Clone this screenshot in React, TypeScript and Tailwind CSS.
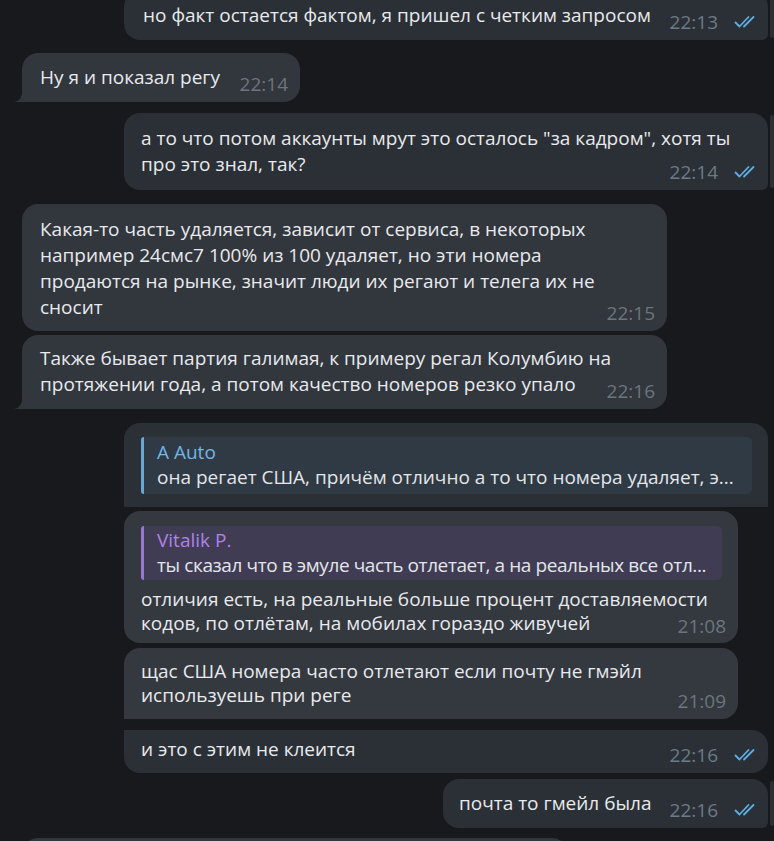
import React from "react";

const Check = () => (
  <svg width="26" height="14" viewBox="0 0 26 14" fill="none" stroke="#5caee3" strokeWidth="1.8" strokeLinecap="round" strokeLinejoin="round">
    <path d="M1.5 7.5 L5.5 11.5 L14.5 2" />
    <path d="M10 11.5 L19.5 2" />
  </svg>
);

const OutTime = ({ t }: { t: string }) => (
  <div className="absolute right-[8px] bottom-[5px] flex items-baseline gap-[16px] text-[19px] leading-[26px] text-[#6c7b88] whitespace-nowrap">
    <span>{t}</span>
    <Check />
  </div>
);

const InTime = ({ t, bottom = "bottom-[5px]" }: { t: string; bottom?: string }) => (
  <div className={`absolute right-[12px] ${bottom} text-[19px] leading-[26px] text-[#6d757d] whitespace-nowrap`}>{t}</div>
);

const InTail = ({ color }: { color: string }) => (
  <svg className="absolute left-[-9px] bottom-0" width="10" height="17" viewBox="0 0 10 17">
    <path d="M10 0 Q10 17 0 17 L10 17 Z" fill={color} />
  </svg>
);

const OutStrip = () => (
  <div className="absolute right-[-6px] top-[2px] bottom-[2px] w-[4px] rounded-[2px] bg-[#2b3036]" />
);

export default function App() {
  return (
    <div className="w-[774px] h-[841px] overflow-hidden bg-[#18191d] font-['Open_Sans',sans-serif] text-[19px] leading-[26px] text-[#e8eaed]">
      <div className="flex flex-col mt-[-9px]">
        {/* 1 */}
        <div className="flex justify-end pr-[6px]">
          <div className="relative w-[644px] h-[49px] rounded-[16px] rounded-br-[6px] bg-[#2b3036] pl-[19px] pt-[11px] whitespace-nowrap">
            но факт остается фактом, я пришел с четким запросом
            <OutTime t="22:13" />
            <OutStrip />
          </div>
        </div>
        {/* 2 */}
        <div className="flex justify-start pl-[22px] mt-[13px]">
          <div className="relative w-[278px] h-[49px] rounded-[16px] rounded-bl-none bg-[#32363d] pl-[18px] pt-[11px] whitespace-nowrap">
            Ну я и показал регу
            <InTime t="22:14" />
            <InTail color="#32363d" />
          </div>
        </div>
        {/* 3 */}
        <div className="flex justify-end pr-[6px] mt-[11px]">
          <div className="relative w-[644px] h-[77px] rounded-[16px] rounded-br-[6px] bg-[#2b3036] pl-[17px] pt-[12px] whitespace-nowrap">
            а то что потом аккаунты мрут это осталось "за кадром", хотя ты
            <br />
            про это знал, так?
            <OutTime t="22:14" />
            <OutStrip />
          </div>
        </div>
        {/* 4 */}
        <div className="flex justify-start pl-[22px] mt-[14px]">
          <div className="relative w-[645px] h-[127px] rounded-[16px] bg-[#32363d] pl-[18px] pt-[12px] whitespace-nowrap">
            Какая-то часть удаляется, зависит от сервиса, в некоторых
            <br />
            например 24смс7 100% из 100 удаляет, но эти номера
            <br />
            продаются на рынке, значит люди их регают и телега их не
            <br />
            сносит
            <InTime t="22:15" />
          </div>
        </div>
        {/* 5 */}
        <div className="flex justify-start pl-[22px] mt-[4px]">
          <div className="relative w-[645px] h-[74px] rounded-[16px] rounded-bl-none bg-[#32363d] pl-[18px] pt-[10px] whitespace-nowrap">
            Также бывает партия галимая, к примеру регал Колумбию на
            <br />
            протяжении года, а потом качество номеров резко упало
            <InTime t="22:16" />
            <InTail color="#32363d" />
          </div>
        </div>
        {/* A */}
        <div className="flex justify-end pr-[6px] mt-[14px]">
          <div className="relative w-[644px] h-[84px] rounded-t-[16px] bg-[#2b3036] pl-[17px] pr-[16px] pt-[14px]">
            <div className="h-[57px] border-l-[3px] border-[#63a9da] bg-[#2f3a45] rounded-r-[5px] rounded-l-[3px] pl-[13px] pr-[10px] pt-[3px] whitespace-nowrap overflow-hidden">
              <div className="leading-[24px] text-[#72b6e6]">A Auto</div>
              <div className="leading-[26px] text-[#e3e6e9]">она регает США, причём отлично а то что номера удаляет, э...</div>
            </div>
          </div>
        </div>
        {/* B */}
        <div className="flex justify-start pl-[124px] mt-[4px]">
          <div className="relative w-[614px] h-[132px] rounded-[16px] bg-[#34383f] pl-[17px] pr-[16px] pt-[15px] whitespace-nowrap">
            <div className="h-[54px] border-l-[3px] border-[#9b75d6] bg-[#403c53] rounded-r-[5px] rounded-l-[3px] pl-[13px] pr-[6px] pt-[2px] overflow-hidden">
              <div className="leading-[24px] text-[#ad84e8]">Vitalik P.</div>
              <div className="leading-[26px] text-[#e3e6e9] tracking-[-0.4px]">ты сказал что в эмуле часть отлетает, а на реальных все отл...</div>
            </div>
            <div className="leading-[24px] mt-[7px]">
              отличия есть, на реальные больше процент доставляемости
              <br />
              кодов, по отлётам, на мобилах гораздо живучей
            </div>
            <InTime t="21:08" bottom="bottom-[4px]" />
          </div>
        </div>
        {/* C */}
        <div className="flex justify-start pl-[124px] mt-[5px]">
          <div className="relative w-[614px] h-[71px] rounded-[16px] rounded-bl-none bg-[#34383f] pl-[17px] pt-[11px] leading-[24px] whitespace-nowrap">
            щас США номера часто отлетают если почту не гмэйл
            <br />
            используешь при реге
            <InTime t="21:09" bottom="bottom-[5px]" />
          </div>
        </div>
        {/* D */}
        <div className="flex justify-end pr-[6px] mt-[11px]">
          <div className="relative w-[644px] h-[43px] rounded-[16px] rounded-tl-none bg-[#2b3036] pl-[17px] pt-[6px] whitespace-nowrap">
            и это с этим не клеится
            <OutTime t="22:16" />
          </div>
        </div>
        {/* E */}
        <div className="flex justify-end pr-[6px] mt-[6px]">
          <div className="relative w-[325px] h-[49px] rounded-[16px] rounded-br-[6px] bg-[#2b3036] pl-[16px] pt-[11px] whitespace-nowrap">
            почта то гмейл была
            <OutTime t="22:16" />
            <OutStrip />
          </div>
        </div>
        {/* F */}
        <div className="flex justify-start pl-[22px] mt-[10px]">
          <div className="w-[546px] h-[40px] rounded-[16px] bg-[#32363d]" />
        </div>
      </div>
    </div>
  );
}
